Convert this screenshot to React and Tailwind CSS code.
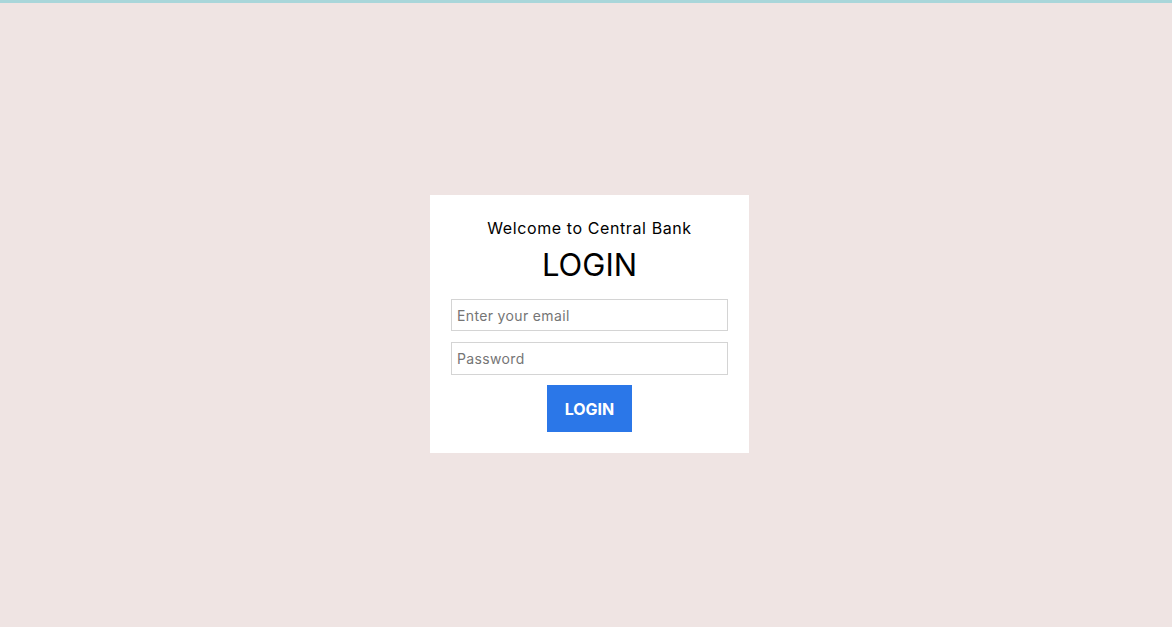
export default function App() {
  return (
    <div
      className="min-h-screen w-full bg-[#efe4e3] border-t-[3px] border-[#a9d6da] flex flex-col"
      style={{ fontFamily: 'Inter, "Open Sans", sans-serif' }}
    >
      <div className="flex-1 flex items-start justify-center pt-[192px] pl-[7px]">
        <div className="w-[319px] bg-white px-[21px] pt-[21px] pb-[21px] flex flex-col items-center">
          <div className="text-[16px] leading-[24px] tracking-[0.6px] text-black">Welcome to Central Bank</div>
          <div className="mt-[5px] text-[31px] leading-[40px] text-black">LOGIN</div>
          <input
            type="email"
            placeholder="Enter your email"
            className="mt-[14px] w-full h-[32px] border border-[#d4d4d4] px-[5px] text-[14px] tracking-[0.35px] text-[#555] placeholder:text-[#757575] outline-none"
          />
          <input
            type="password"
            placeholder="Password"
            className="mt-[11px] w-full h-[33px] border border-[#d4d4d4] px-[5px] text-[14px] tracking-[0.35px] text-[#555] placeholder:text-[#757575] outline-none"
          />
          <button className="mt-[10px] w-[85px] h-[47px] bg-[#2b77e8] text-white font-bold text-[16px]">
            LOGIN
          </button>
        </div>
      </div>
    </div>
  );
}
